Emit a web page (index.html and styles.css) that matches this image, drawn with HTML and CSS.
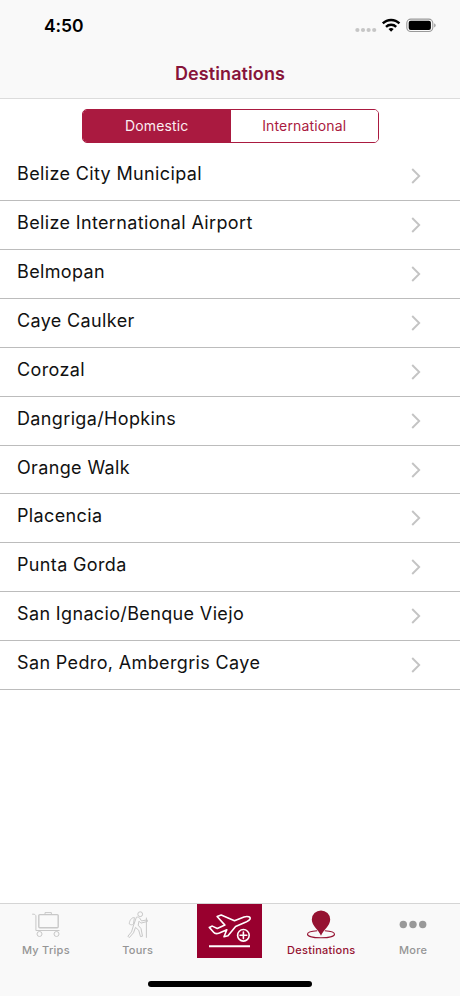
FILE: index.html
```html
<!DOCTYPE html>
<html lang="en">
    <head>
        <meta charset="UTF-8">
        <title>Destinations</title>
        <link rel="stylesheet" href="styles.css">
    </head>
    <body>
        <header class="top">
            <div class="status">
                <span class="time">4:50</span>
                <svg class="status-icons" width="82" height="20" viewBox="0 0 82 20">
                    <g fill="#c6c6c6">
                        <circle cx="2.4" cy="15" r="2.1"/>
                        <circle cx="8" cy="15" r="2.1"/>
                        <circle cx="13.6" cy="15" r="2.1"/>
                        <circle cx="19.2" cy="15" r="2.1"/>
                    </g>
                    <g fill="none" stroke="#000" stroke-width="2.4">
                        <path d="M27.8 8.4a11.7 11.7 0 0 1 16.6 0"/>
                        <path d="M31 11.9a7.2 7.2 0 0 1 10.2 0"/>
                    </g>
                    <path d="M33.5 14.1a4 4 0 0 1 5.2 0L36.1 16.8z"/>
                    <rect x="51.8" y="4.1" width="26" height="12.4" rx="4" fill="none" stroke="#999" stroke-width="1.1"/>
                    <rect x="53.7" y="5.8" width="22.2" height="9.2" rx="2"/>
                    <path d="M79.2 8.2c2 .8 2 3.4 0 4.2z" fill="#999"/>
                </svg>
            </div>
            <h1>Destinations</h1>
        </header>
        <main>
            <div class="segments">
                <button class="segment active">Domestic</button>
                <button class="segment">International</button>
            </div>
            <ul class="list">
                <li><span>Belize City Municipal</span><svg class="chevron" viewBox="0 0 10 16"><path d="M1.2 1l7 7-7 7"/></svg></li>
                <li><span>Belize International Airport</span><svg class="chevron" viewBox="0 0 10 16"><path d="M1.2 1l7 7-7 7"/></svg></li>
                <li><span>Belmopan</span><svg class="chevron" viewBox="0 0 10 16"><path d="M1.2 1l7 7-7 7"/></svg></li>
                <li><span>Caye Caulker</span><svg class="chevron" viewBox="0 0 10 16"><path d="M1.2 1l7 7-7 7"/></svg></li>
                <li><span>Corozal</span><svg class="chevron" viewBox="0 0 10 16"><path d="M1.2 1l7 7-7 7"/></svg></li>
                <li><span>Dangriga/Hopkins</span><svg class="chevron" viewBox="0 0 10 16"><path d="M1.2 1l7 7-7 7"/></svg></li>
                <li><span>Orange Walk</span><svg class="chevron" viewBox="0 0 10 16"><path d="M1.2 1l7 7-7 7"/></svg></li>
                <li><span>Placencia</span><svg class="chevron" viewBox="0 0 10 16"><path d="M1.2 1l7 7-7 7"/></svg></li>
                <li><span>Punta Gorda</span><svg class="chevron" viewBox="0 0 10 16"><path d="M1.2 1l7 7-7 7"/></svg></li>
                <li><span>San Ignacio/Benque Viejo</span><svg class="chevron" viewBox="0 0 10 16"><path d="M1.2 1l7 7-7 7"/></svg></li>
                <li><span>San Pedro, Ambergris Caye</span><svg class="chevron" viewBox="0 0 10 16"><path d="M1.2 1l7 7-7 7"/></svg></li>
            </ul>
        </main>
        <footer>
            <nav class="tabs">
                <a class="tab">
                    <svg class="line" width="30" height="30" viewBox="0 0 30 30">
                        <path d="M1.2 2.2h2.2l1.5 1.5v14.8h23.6"/>
                        <rect x="7.8" y="2.6" width="19.4" height="13.2" rx="1" stroke-width="1.4"/>
                        <path d="M14 2.4V.6h6.4v1.8"/>
                        <circle cx="8.5" cy="22" r="2.5"/>
                        <circle cx="25.5" cy="22" r="2.5"/>
                    </svg>
                    <span>My Trips</span>
                </a>
                <a class="tab">
                    <svg class="line" width="30" height="30" viewBox="0 0 30 30">
                        <circle cx="17.2" cy="2.2" r="2.4"/>
                        <path d="M11.4 5.6c-2.9-.5-4.9 3.2-5.2 6.2 1.5 1.4 3.2 1.3 4.3.2z"/>
                        <path d="M13.4 5.2c1.5-.5 3 .1 3.8 1.6l1.3 2.1 5.7-1 .2 1.6-6.5 1.6-1.9-1.9-.8 4 2.8 3.4 1.5 7.6-2 .4-1.8-6.4-3.2-2.8-2 5.4-4.2 4.8-1.4-1.4 3.6-4.3 1.8-5.8z"/>
                        <path d="M23.4 5.6v20.2"/>
                    </svg>
                    <span>Tours</span>
                </a>
                <a class="tab book">
                    <svg width="65" height="54" viewBox="0 0 65 54">
                        <g fill="none" stroke="#fff" stroke-width="1.6" stroke-linejoin="round" stroke-linecap="round">
                            <path d="M12.3 23.4l3-1.3 5 2.4 7.6-3.4-7.8-8.6 4.1-1.4 13.3 5.7 9.5-3.8c4-1.2 6.8.1 6 2.2-.6 1.3-2.4 2.1-4 2.9L38.6 22.5 31 31.7l-4 1.1 2.8-7.1-7.4 3.2c-2.5 1-4.6.9-5.8-.7z"/>
                            <circle cx="46.4" cy="31.3" r="5.8" fill="#98002e"/>
                            <path d="M46.4 28v6.6M43.1 31.3h6.6"/>
                        </g>
                        <path d="M12 42.3h41" stroke="#fff" stroke-width="2"/>
                    </svg>
                </a>
                <a class="tab selected">
                    <svg width="30" height="30" viewBox="0 0 30 30">
                        <path d="M11.2 18.8C5.6 19.2 1.5 20.4 1.5 22.2c0 2.1 5.6 3.6 13.5 3.6s13.5-1.5 13.5-3.6c0-1.8-4.1-3-9.7-3.4" fill="none" stroke="#951231" stroke-width="1.1"/>
                        <path d="M15 23.8C13 18.1 5.8 13.6 5.8 7.4a9.2 9 0 0 1 18.4 0C24.2 13.6 17 18.1 15 23.8z" fill="#951231"/>
                    </svg>
                    <span>Destinations</span>
                </a>
                <a class="tab">
                    <svg width="30" height="30" viewBox="0 0 30 30" fill="#999">
                        <circle cx="5.3" cy="12.5" r="3.7"/>
                        <circle cx="15" cy="12.5" r="3.7"/>
                        <circle cx="24.7" cy="12.5" r="3.7"/>
                    </svg>
                    <span>More</span>
                </a>
            </nav>
            <div class="home-bar"></div>
        </footer>
    </body>
</html>
```
FILE: styles.css
```css
* {
    box-sizing: border-box;
}

body {
    margin: 0;
    height: 996px;
    display: flex;
    flex-direction: column;
    overflow: hidden;
    background-color: #fff;
    font-family: Inter, "Liberation Sans", sans-serif;
}

.top {
    height: 99px;
    background-color: #f9f9f9;
    border-bottom: 1px solid #dcdcdc;
}

.status {
    height: 49px;
    display: flex;
    justify-content: space-between;
    padding: 15px 23px 0 44px;
}

.time {
    font-size: 17.5px;
    font-weight: 600;
    line-height: 22px;
    letter-spacing: -0.1px;
}

h1 {
    margin: 0;
    color: #87143a;
    font-size: 18px;
    font-weight: 600;
    line-height: 50px;
    letter-spacing: 0.1px;
    text-align: center;
}

main {
    flex: 1;
}

.segments {
    width: 297px;
    height: 34px;
    margin: 10px 0 9.2px 82px;
    display: flex;
    border: 1px solid #aa1a40;
    border-radius: 5px;
    overflow: hidden;
}

.segment {
    flex: 1;
    padding: 0 0 1px;
    border: 0;
    background-color: #fff;
    color: #aa1a40;
    font-family: inherit;
    font-size: 14px;
    letter-spacing: 0.15px;
}

.segment.active {
    background-color: #aa1a40;
    color: #fbeef1;
}

.list {
    margin: 0;
    padding: 0;
    list-style: none;
}

.list li {
    height: 48.9px;
    display: flex;
    justify-content: space-between;
    padding: 10px 39px 0 17px;
    border-bottom: 1px solid #bcbcbc;
    color: #111;
    font-size: 18px;
    line-height: 24px;
    letter-spacing: 0.36px;
}

.chevron {
    width: 10px;
    height: 16px;
    margin-top: 6px;
    fill: none;
    stroke: #c4c4c4;
    stroke-width: 1.9;
}

footer {
    height: 93px;
    background-color: #f9f9f9;
    border-top: 1px solid #d5d5d5;
}

.tabs {
    height: 77px;
    display: flex;
    padding-right: 1px;
}

.tab {
    flex: 1;
    display: flex;
    flex-direction: column;
    align-items: center;
    padding-top: 8px;
    color: #959595;
    font-size: 11px;
    font-weight: 500;
    line-height: 16px;
    letter-spacing: 0.25px;
}

.tab svg {
    overflow: visible;
}

.tab.book {
    padding-top: 0;
}

.book svg {
    background-color: #98002e;
}

.tab.selected {
    color: #951231;
}

.line {
    fill: none;
    stroke: #c8c8c8;
    stroke-width: 1;
}

.home-bar {
    width: 164px;
    height: 6px;
    margin: 0 auto;
    border-radius: 3px;
    background-color: #000;
}
```
